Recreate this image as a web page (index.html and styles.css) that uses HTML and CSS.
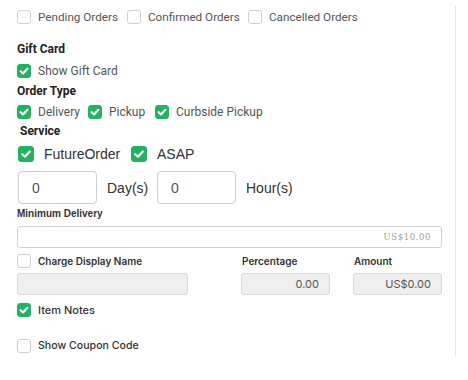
FILE: index.html
```html
<!DOCTYPE html>
<html>
<head>
<meta charset="utf-8">
<link rel="stylesheet" href="styles.css">
</head>
<body>
<div class="panel">
  <div class="row r-status">
    <label class="cb"><span class="box"></span><span>Pending Orders</span></label>
    <label class="cb"><span class="box"></span><span>Confirmed Orders</span></label>
    <label class="cb"><span class="box"></span><span>Cancelled Orders</span></label>
  </div>

  <div class="title t-gift">Gift Card</div>
  <div class="row r-gift">
    <label class="cb"><span class="box on"><svg viewBox="0 0 14 14"><path d="M3.6 7.2 L6 9.5 L10.4 4.8" /></svg></span><span>Show Gift Card</span></label>
  </div>

  <div class="title t-order">Order Type</div>
  <div class="row r-order">
    <label class="cb"><span class="box on"><svg viewBox="0 0 14 14"><path d="M3.6 7.2 L6 9.5 L10.4 4.8" /></svg></span><span>Delivery</span></label>
    <label class="cb"><span class="box on"><svg viewBox="0 0 14 14"><path d="M3.6 7.2 L6 9.5 L10.4 4.8" /></svg></span><span>Pickup</span></label>
    <label class="cb"><span class="box on"><svg viewBox="0 0 14 14"><path d="M3.6 7.2 L6 9.5 L10.4 4.8" /></svg></span><span>Curbside Pickup</span></label>
  </div>

  <div class="title t-service">Service</div>
  <div class="row r-service">
    <label class="cb big"><span class="box on"><svg viewBox="0 0 16 16"><path d="M4.2 8.3 L6.9 10.8 L11.8 5.5" /></svg></span><span>FutureOrder</span></label>
    <label class="cb big"><span class="box on"><svg viewBox="0 0 16 16"><path d="M4.2 8.3 L6.9 10.8 L11.8 5.5" /></svg></span><span>ASAP</span></label>
  </div>

  <div class="row r-time">
    <div class="num">0</div><span class="unit">Day(s)</span>
    <div class="num">0</div><span class="unit">Hour(s)</span>
  </div>

  <div class="small-label">Minimum Delivery</div>
  <div class="field min-del">US$10.00</div>

  <div class="charge">
    <div class="col c-name">
      <label class="cb heading"><span class="box"></span><span>Charge Display Name</span></label>
      <div class="field grey"></div>
    </div>
    <div class="col c-pct">
      <div class="heading hl">Percentage</div>
      <div class="field grey val">0.00</div>
    </div>
    <div class="col c-amt">
      <div class="heading hl">Amount</div>
      <div class="field grey val">US$0.00</div>
    </div>
  </div>

  <div class="row r-notes">
    <label class="cb strong"><span class="box on"><svg viewBox="0 0 14 14"><path d="M3.6 7.2 L6 9.5 L10.4 4.8" /></svg></span><span>Item Notes</span></label>
  </div>
  <div class="row r-coupon">
    <label class="cb strong"><span class="box"></span><span>Show Coupon Code</span></label>
  </div>
</div>
</body>
</html>
```

FILE: styles.css
```css
* { box-sizing: border-box; }
html, body { margin: 0; padding: 0; background: #fff; }
body { width: 468px; height: 380px; font-family: Roboto, "Liberation Sans", Arial, sans-serif; overflow: hidden; }

.panel {
  margin-top: 6px;
  width: 456px;
  height: 351px;
  border-right: 1px solid #e6e6e6;
  padding: 4px 0 0 17px;
}

.row { display: flex; align-items: center; }

.cb { display: flex; align-items: center; font-size: 12px; color: #555; line-height: 14px; }
.box {
  width: 14px; height: 14px;
  border: 1px solid #cfcfcf;
  border-radius: 3px;
  background: #fff;
  margin-right: 7px;
  flex: none;
  display: flex;
}
.box.on { background: #21b35e; border-color: #21b35e; }
.box svg { width: 100%; height: 100%; }
.box svg path { fill: none; stroke: #fff; stroke-width: 2.2; stroke-linecap: round; stroke-linejoin: round; }
.box.on svg { margin: -1px; width: 14px; height: 14px; }

.r-status { height: 14px; }
.r-status .cb:nth-child(1) { width: 110px; }
.r-status .cb:nth-child(2) { width: 121px; }
.r-status .cb { font-size: 11.7px; }

.title { font-size: 12px; font-weight: 700; color: #222; line-height: 14px; }
.t-gift { margin-top: 18px; }
.r-gift { margin-top: 8px; height: 14px; }
.t-order { margin-top: 6px; }
.r-order { margin-top: 7px; height: 14px; }
.r-order .cb:nth-child(1) { width: 71px; }
.r-order .cb:nth-child(2) { width: 67px; }
.t-service { margin-top: 5px; padding-left: 3px; }

.r-service { margin-top: 8px; height: 16px; padding-left: 1px; }
.cb.big { font-family: "Liberation Sans", Arial, sans-serif; font-size: 14px; color: #333; line-height: 16px; }
.cb.big .box { width: 16px; height: 16px; margin-right: 10px; }
.cb.big .box.on svg { width: 16px; height: 16px; }
.r-service .cb:nth-child(1) { width: 113px; }

.r-time { margin-top: 9px; height: 33px; padding-left: 1px; }
.num {
  width: 79px; height: 33px;
  border: 1px solid #ccc;
  border-radius: 4px;
  padding-left: 13px;
  display: flex; align-items: center;
  font-family: "Liberation Sans", Arial, sans-serif;
  font-size: 14px; color: #555;
}
.unit { font-family: "Liberation Sans", Arial, sans-serif; font-size: 14px; color: #333; margin-left: 10px; width: 50px; }

.small-label { margin-top: 4px; font-family: "Liberation Sans", Arial, sans-serif; font-size: 10px; font-weight: 700; color: #333; line-height: 12px; }

.field {
  height: 22px;
  border: 1px solid #d2d2d2;
  border-radius: 3px;
  display: flex; align-items: center; justify-content: flex-end;
  padding-right: 10px;
}
.min-del { margin-top: 6px; width: 425px; font-family: "DejaVu Serif", serif; font-size: 8.5px; color: #9a9a9a; letter-spacing: 0.6px; }

.charge { display: flex; margin-top: 6px; }
.col { display: flex; flex-direction: column; }
.heading { font-family: Inter, "Open Sans", sans-serif; font-size: 10px; font-weight: 600; color: #333; line-height: 14px; }
.c-name { width: 224px; }
.c-name .field { width: 171px; }
.c-pct { width: 112px; }
.c-pct .field { width: 89px; }
.c-amt .field { width: 89px; }
.hl { padding-left: 1px; }
.field.grey { background: #efefef; border-color: #d8d8d8; margin-top: 5px; }
.field.val { font-family: Inter, "Open Sans", sans-serif; font-size: 11px; color: #555; padding-right: 10px; }

.cb.strong { font-family: Inter, "Open Sans", sans-serif; font-size: 11px; font-weight: 500; color: #333; }
.r-notes { margin-top: 8px; height: 14px; }
.r-coupon { margin-top: 22px; height: 14px; }
.r-coupon .cb { font-size: 10.6px; }
```
